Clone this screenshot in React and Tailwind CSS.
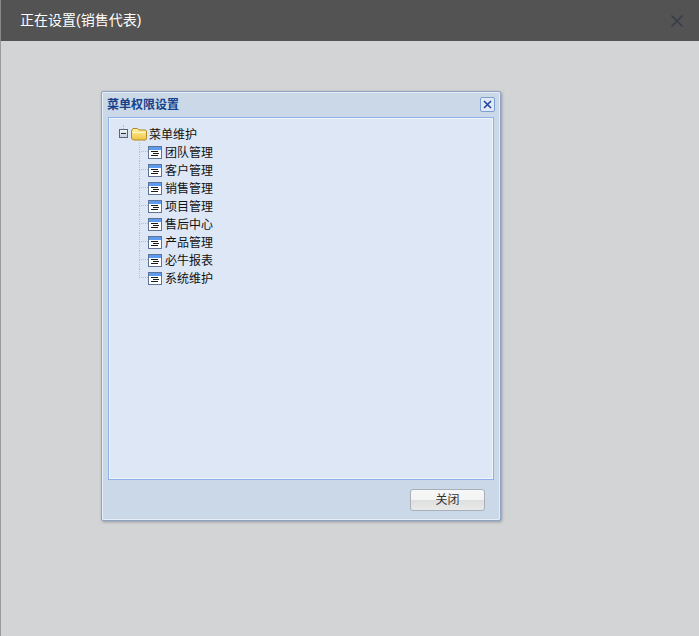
const menus = ["团队管理", "客户管理", "销售管理", "项目管理", "售后中心", "产品管理", "必牛报表", "系统维护"];

const fontStack = "font-['Liberation_Sans','Noto_Sans_CJK_SC',sans-serif]";

function FolderIcon() {
  return (
    <svg width="16" height="14" viewBox="0 0 16 14" className="shrink-0">
      <defs>
        <linearGradient id="folderFill" x1="0" y1="0" x2="0" y2="1">
          <stop offset="0" stopColor="#fff3a6" />
          <stop offset="1" stopColor="#f0c440" />
        </linearGradient>
      </defs>
      <path d="M0.5 4 L2 1.5 H6.5 L8 3 H14 Q15.5 3 15.5 4.5 V11.5 Q15.5 13 14 13 H3 Q1 13 0.5 11 Z" fill="url(#folderFill)" stroke="#b08a24" />
      <path d="M1.5 5.5 H14.5" stroke="#fff8c8" />
    </svg>
  );
}

function MinusBox() {
  return (
    <svg width="9" height="9" viewBox="0 0 9 9" className="shrink-0">
      <defs>
        <linearGradient id="boxFill" x1="0" y1="0" x2="0" y2="1">
          <stop offset="0" stopColor="#f4f6f9" />
          <stop offset="1" stopColor="#c3cede" />
        </linearGradient>
      </defs>
      <rect x="0.5" y="0.5" width="8" height="8" fill="url(#boxFill)" stroke="#56647c" />
      <path d="M2 4.5 H7" stroke="#1d2a44" />
    </svg>
  );
}

function NodeIcon() {
  return (
    <svg width="14" height="13" viewBox="0 0 14 13" className="shrink-0">
      <rect x="0.5" y="0.5" width="13" height="12" fill="#ffffff" stroke="#5f7396" />
      <rect x="1" y="1" width="12" height="3" fill="#5b9cf0" />
      <path d="M3 5.5 H10 M5 7.5 H11 M3 9.5 H10" stroke="#1a1a1a" />
    </svg>
  );
}

function TreeRow({ label, last }) {
  return (
    <div className="flex h-[18px] items-center">
      <div className="flex h-[18px] w-[9px] shrink-0 flex-col">
        <div className="h-[9px] border-b border-l border-dotted border-[#b4bdcb]" />
        {!last && <div className="h-[9px] border-l border-dotted border-[#b4bdcb]" />}
      </div>
      <NodeIcon />
      <span className="ml-[3px] mt-[2px] text-[12px] leading-[18px] text-[#111111]">{label}</span>
    </div>
  );
}

export default function App() {
  return (
    <div className={`flex h-[636px] w-[699px] flex-col overflow-hidden bg-[#d3d4d5] ${fontStack}`}>
      <header className="flex h-[41px] shrink-0 items-center justify-between border-l border-[#8a8a8a] bg-[#535353] pl-[19px] pr-[16px]">
        <span className="text-[14px] text-white">正在设置(销售代表)</span>
        <svg width="12" height="12" viewBox="0 0 12 12" className="mt-[1px]">
          <path d="M0.5 0.5 L11.5 11.5 M11.5 0.5 L0.5 11.5" stroke="#33394a" strokeWidth="1.4" />
        </svg>
      </header>

      <div className="flex flex-1 border-l border-[#9a9a9c] pl-[100px] pt-[50px]">
        <div className="flex h-[430px] w-[400px] flex-col rounded-[2px] border border-[#8fa3c2] bg-[#cbd8e8] px-[6px] shadow-[inset_0_0_0_1px_#e6eef8,1px_1px_3px_rgba(80,90,110,0.5)]">
          <div className="-mx-[1px] flex h-[25px] shrink-0 items-center justify-between">
            <span className="text-[12px] font-bold text-[#15428b]">菜单权限设置</span>
            <div className="flex h-[15px] w-[15px] items-center justify-center rounded-[2px] border border-[#7f9fd0] bg-[#dfe9f8]">
              <svg width="9" height="9" viewBox="0 0 9 9">
                <path d="M1 1 L8 8 M8 1 L1 8" stroke="#23439a" strokeWidth="1.6" />
              </svg>
            </div>
          </div>

          <div className="h-[363px] shrink-0 border border-[#8fb0ea] bg-[#dde7f6] pl-[10px] pt-[7px] shadow-[inset_0_0_0_1px_#f0f5fc]">
            <div className="flex h-[18px] items-center">
              <div className="flex h-[18px] w-[9px] shrink-0 flex-col items-center">
                <div className="h-[4px] border-l border-dotted border-[#b4bdcb]" />
                <MinusBox />
              </div>
              <div className="ml-[3px]">
                <FolderIcon />
              </div>
              <span className="ml-[2px] mt-[2px] text-[12px] leading-[18px] text-[#111111]">菜单维护</span>
            </div>
            <div className="ml-[20px] flex flex-col">
              {menus.map((label, i) => (
                <TreeRow key={label} label={label} last={i === menus.length - 1} />
              ))}
            </div>
          </div>

          <div className="flex flex-1 items-start justify-end pr-[9px] pt-[9px]">
            <button className="h-[22px] w-[75px] rounded-[3px] border border-[#a9afb8] bg-[linear-gradient(#f7f7f7_0%,#f4f4f4_50%,#dedfe0_50%,#e9e9e9_100%)] text-[12px] text-[#333333]">
              关闭
            </button>
          </div>
        </div>
      </div>
    </div>
  );
}
